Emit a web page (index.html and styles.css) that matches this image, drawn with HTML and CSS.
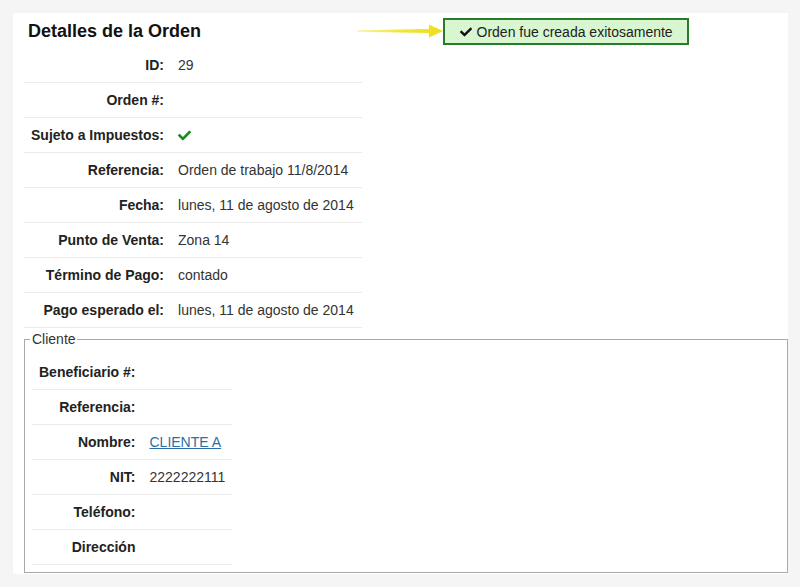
FILE: index.html
```html
<!DOCTYPE html>
<html lang="es">
<head>
<meta charset="utf-8">
<title>Detalles de la Orden</title>
<link rel="stylesheet" href="styles.css">
</head>
<body>
<div class="page">
  <div class="panel">
    <div class="header">
      <h1 class="title">Detalles de la Orden</h1>
      <svg class="arrow" width="86" height="16" viewBox="0 0 86 16" aria-hidden="true">
        <defs>
          <linearGradient id="ag" x1="0" y1="0" x2="1" y2="0">
            <stop offset="0" stop-color="#f3ec6a" stop-opacity="0.6"/>
            <stop offset="0.5" stop-color="#f0e634"/>
            <stop offset="1" stop-color="#eddf1a"/>
          </linearGradient>
        </defs>
        <path d="M0 7.2 L72 6 L72 1.5 L86 8 L72 14.5 L72 10 L0 8.8 Z" fill="url(#ag)"/>
      </svg>
      <div class="alert">
        <svg class="alert-check" width="12" height="12" viewBox="0 0 512 512" aria-hidden="true"><path d="M173.898 439.404l-166.4-166.4c-9.997-9.997-9.997-26.206 0-36.204l36.203-36.204c9.997-9.998 26.207-9.998 36.204 0L192 312.69 432.095 72.596c9.997-9.997 26.207-9.997 36.204 0l36.203 36.204c9.997 9.997 9.997 26.206 0 36.204l-294.4 294.401c-9.998 9.997-26.207 9.997-36.204-.001z" fill="#111"/></svg>
        <span>Orden fue creada exitosamente</span>
      </div>
    </div>

    <table class="details main">
      <tr><th>ID:</th><td>29</td></tr>
      <tr><th>Orden #:</th><td></td></tr>
      <tr><th>Sujeto a Impuestos:</th><td><svg class="ok" width="13" height="13" viewBox="0 0 512 512" aria-hidden="true"><path d="M173.898 439.404l-166.4-166.4c-9.997-9.997-9.997-26.206 0-36.204l36.203-36.204c9.997-9.998 26.207-9.998 36.204 0L192 312.69 432.095 72.596c9.997-9.997 26.207-9.997 36.204 0l36.203 36.204c9.997 9.997 9.997 26.206 0 36.204l-294.4 294.401c-9.998 9.997-26.207 9.997-36.204-.001z" fill="#1e8a1e"/></svg></td></tr>
      <tr><th>Referencia:</th><td>Orden de trabajo 11/8/2014</td></tr>
      <tr><th>Fecha:</th><td>lunes, 11 de agosto de 2014</td></tr>
      <tr><th>Punto de Venta:</th><td>Zona 14</td></tr>
      <tr><th>Término de Pago:</th><td>contado</td></tr>
      <tr><th>Pago esperado el:</th><td>lunes, 11 de agosto de 2014</td></tr>
    </table>

    <fieldset class="client">
      <legend>Cliente</legend>
      <table class="details">
        <tr><th>Beneficiario #:</th><td></td></tr>
        <tr><th>Referencia:</th><td></td></tr>
        <tr><th>Nombre:</th><td><a href="#">CLIENTE A</a></td></tr>
        <tr><th>NIT:</th><td>2222222111</td></tr>
        <tr><th>Teléfono:</th><td></td></tr>
        <tr><th>Dirección</th><td></td></tr>
      </table>
    </fieldset>
  </div>
</div>
</body>
</html>
```

FILE: styles.css
```css
html, body {
  margin: 0;
  padding: 0;
  background: #f5f5f5;
}
body {
  font-family: "Liberation Sans", Arial, sans-serif;
  font-size: 14px;
  color: #333;
}
.page {
  padding: 13px 12px 13px 13px;
}
.panel {
  background: #fff;
  padding: 0 0 1px 11px;
}
.header {
  display: flex;
  align-items: center;
  height: 35px;
}
.title {
  margin: 0 0 0 4px;
  font-size: 18px;
  font-weight: bold;
  color: #111;
  line-height: 22px;
}
.arrow {
  margin-left: 156px;
  margin-top: 1px;
  flex: none;
}
.alert {
  box-sizing: border-box;
  width: 246px;
  height: 27px;
  margin-top: 2px;
  border: 2px solid #2b7a2b;
  background: #d8f6d0;
  color: #222;
  display: flex;
  align-items: center;
  justify-content: center;
  gap: 5px;
  font-size: 14px;
}
.alert-check {
  display: block;
}
.details {
  border-collapse: collapse;
}
.details th,
.details td {
  height: 33px;
  padding: 1px 7px 0 7px;
  line-height: 17px;
  border-bottom: 1px solid #ebebeb;
  vertical-align: middle;
  white-space: nowrap;
}
.details th {
  text-align: right;
  font-weight: bold;
  color: #222;
}
.details td {
  text-align: left;
  color: #333;
}
.main {
  width: 338px;
}
.main th {
  width: 133px;
}
.ok {
  display: block;
}
.details a {
  color: #2a6fa8;
  text-decoration: underline;
}
.client {
  margin: 3px 0 0 0;
  padding: 8px 7px 7px 7px;
  border: 1px solid #a9a9a9;
  min-width: 0;
}
.client legend {
  padding: 0 1px 0 2px;
  margin-left: -2px;
  line-height: 16px;
  font-size: 14px;
  color: #333;
}
```
